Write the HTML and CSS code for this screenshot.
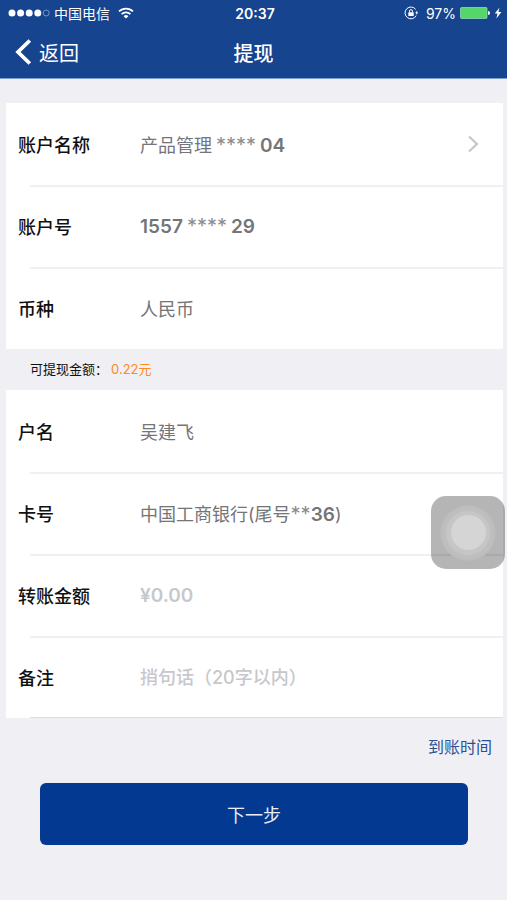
FILE: index.html
```html
<!DOCTYPE html>
<html lang="zh-CN">
<head>
<meta charset="utf-8">
<meta name="viewport" content="width=device-width, initial-scale=1">
<title>提现</title>
<link rel="stylesheet" href="styles.css">
</head>
<body>
<header class="header">
  <div class="status">
    <div class="status-left">
      <svg class="signal" width="42" height="10" viewBox="0 0 42 10" aria-hidden="true">
        <g fill="#fff"><circle cx="4" cy="5" r="3.5"/><circle cx="12.6" cy="5" r="3.5"/><circle cx="21.2" cy="5" r="3.5"/><circle cx="29.8" cy="5" r="3.5"/></g>
        <circle cx="38.2" cy="5" r="3" fill="none" stroke="#8ea8d4" stroke-width="0.8"/>
      </svg>
      <span>中国电信</span>
      <svg class="wifi" width="16" height="12" viewBox="0 0 16 12" fill="none" stroke="#fff" stroke-width="1.8" aria-hidden="true">
        <path d="M1 4.4a10 10 0 0 1 14 0M3.6 7.1a6.3 6.3 0 0 1 8.8 0"/>
        <path d="M8 11.6 5.6 9.2a3.4 3.4 0 0 1 4.8 0z" fill="#fff" stroke="none"/>
      </svg>
    </div>
    <time class="clock">20:37</time>
    <div class="status-right">
      <svg width="14" height="14" viewBox="0 0 14 14" fill="none" stroke="#fff" aria-hidden="true">
        <path d="M11.7 3.4A5.9 5.9 0 1 0 12.2 9.6M12.7 5.2a5.9 5.9 0 0 1 .2 1.8"/>
        <path d="M11.2 6.5h3l-1.5 2z" fill="#fff" stroke="none"/>
        <path d="M5.5 6.4V5.2a1.5 1.5 0 0 1 3 0v1.2"/>
        <rect x="4.3" y="6.2" width="5.4" height="3.8" rx="0.5" fill="#fff" stroke="none"/>
      </svg>
      <span class="percent">97%</span>
      <svg width="30" height="12" viewBox="0 0 30 12" aria-hidden="true">
        <rect x="0.5" y="0.5" width="26.5" height="11" rx="1" fill="#53d769" stroke="#a3dcc0" stroke-width="0.7"/>
        <path d="M28 4a2 2 0 0 1 0 4z" fill="#fff"/>
      </svg>
      <svg width="8" height="12" viewBox="0 0 8 12" aria-hidden="true"><path d="M5.4.8.8 6.6h2.7l-1.1 4.8 5-6.4H4.5z" fill="#fff"/></svg>
    </div>
  </div>
  <nav class="navbar">
    <a class="back" href="#">
      <svg width="18" height="26" viewBox="0 0 18 26" fill="none" stroke="#fff" stroke-width="3.8" aria-hidden="true"><path d="M15.8 1.5 4 13l11.8 11.5"/></svg>
      <span>返回</span>
    </a>
    <h1 class="title">提现</h1>
  </nav>
</header>
<main class="content">
  <form>
    <section class="card">
      <a class="row" href="#">
        <span class="label">账户名称</span>
        <span class="value">产品管理<span class="mask spaced">****</span><b>04</b></span>
        <svg class="chevron" width="12" height="18" viewBox="0 0 12 18" fill="none" stroke="#c4c4c8" stroke-width="2" aria-hidden="true"><path d="m2 1.5 8 7.5-8 7.5"/></svg>
      </a>
      <div class="row">
        <span class="label">账户号</span>
        <span class="value"><b>1557</b><span class="mask spaced">****</span><b>29</b></span>
      </div>
      <div class="row">
        <span class="label">币种</span>
        <span class="value">人民币</span>
      </div>
    </section>
    <p class="balance">可提现金额：<span class="amount">0.22元</span></p>
    <section class="card card-lined">
      <div class="row">
        <span class="label">户名</span>
        <span class="value">吴建飞</span>
      </div>
      <div class="row">
        <span class="label">卡号</span>
        <span class="value">中国工商银行(尾号<span class="mask">**</span><b>36</b>)</span>
      </div>
      <div class="row">
        <label class="label" for="amount">转账金额</label>
        <input class="value field money" id="amount" type="text" inputmode="decimal" placeholder="¥0.00">
      </div>
      <div class="row">
        <label class="label" for="remark">备注</label>
        <input class="value field" id="remark" type="text" maxlength="20" placeholder="捎句话（20字以内）">
      </div>
    </section>
    <div class="actions">
      <a class="arrival" href="#">到账时间</a>
      <button class="next" type="submit">下一步</button>
    </div>
  </form>
</main>
<button class="assistive" type="button" aria-label="辅助触控"><span class="ring"><span class="dot"></span></span></button>
</body>
</html>
```
FILE: styles.css
```css
* {
  box-sizing: border-box;
}

body {
  margin: 0;
  background: #efeff4;
  color: #111;
  font-family: Inter, "Noto Sans CJK SC", sans-serif;
  font-size: 18px;
}

a {
  color: inherit;
  text-decoration: none;
}

.header {
  background: #16448f;
  border-bottom: 1px solid #7d9fce;
  color: #fff;
}

.status {
  display: grid;
  grid-template-columns: 1fr auto 1fr;
  align-items: center;
  height: 26px;
  padding: 0 5px 0 8px;
  font-size: 14px;
}

.status-left,
.status-right {
  display: flex;
  align-items: center;
}

.status-left {
  gap: 4px;
}

.wifi {
  margin-left: 4px;
}

.status-right {
  justify-content: flex-end;
  gap: 4px;
}

.percent {
  margin-left: 4px;
}

.clock {
  font-weight: 600;
}

.navbar {
  display: grid;
  grid-template-columns: 1fr auto 1fr;
  align-items: center;
  height: 52px;
  padding: 0 14px;
}

.back {
  display: flex;
  align-items: center;
  gap: 7px;
  font-size: 20px;
}

.title {
  margin: 0;
  font-size: 20px;
  font-weight: 500;
}

.content {
  padding-top: 24px;
}

.card {
  margin: 0 4px 0 6px;
  background: #fff;
}

.row {
  display: flex;
  align-items: center;
  height: 82px;
  padding: 0 24px 0 12px;
}

.row + .row {
  background: linear-gradient(#f0f0f2, #f0f0f2) 24px 0 / 100% 2px no-repeat;
}

.card-lined {
  background: linear-gradient(#dedee2, #dedee2) 24px 100% / 100% 1px no-repeat #fff;
}

.label {
  flex: 0 0 122px;
  font-weight: 500;
}

.value {
  flex: 1;
  min-width: 0;
  color: #757578;
}

.value b {
  font-size: 19px;
  font-weight: 600;
}

.mask {
  color: #8c8c90;
  font-size: 20px;
  line-height: 20px;
}

.spaced {
  margin: 0 4px;
}

.field {
  padding: 0;
  border: 0;
  outline: 0;
  background: none;
  font: inherit;
  font-weight: 500;
}

.money {
  font-size: 19px;
  font-weight: 600;
}

.field::placeholder {
  color: #c7c7cc;
  opacity: 1;
}

.balance {
  margin: 0;
  padding: 0 30px;
  font-size: 13px;
  line-height: 41px;
}

.amount {
  margin-left: 3px;
  color: #ff8a22;
}

.actions {
  display: flex;
  flex-direction: column;
  padding: 17px 39px 48px 40px;
}

.arrival {
  align-self: flex-end;
  margin-right: -24px;
  color: #2c4f94;
  font-size: 16px;
  line-height: 24px;
}

.next {
  height: 62px;
  margin-top: 24px;
  border: 0;
  border-radius: 6px;
  background: #033990;
  color: #e8eefa;
  font: inherit;
}

.assistive {
  position: fixed;
  top: 496px;
  right: 2px;
  display: grid;
  place-items: center;
  width: 74px;
  height: 73px;
  padding: 0;
  border: 0;
  border-radius: 15px;
  background: rgba(0, 0, 0, 0.29);
}

.ring {
  display: grid;
  place-items: center;
  width: 56px;
  height: 56px;
  border-radius: 50%;
  background: radial-gradient(circle, #c6c6c6 0 21px, #bebebe 23px 26px, #b8b8b8 28px);
}

.dot {
  width: 35px;
  height: 35px;
  border-radius: 50%;
  background: #d5d5d5;
}
```
